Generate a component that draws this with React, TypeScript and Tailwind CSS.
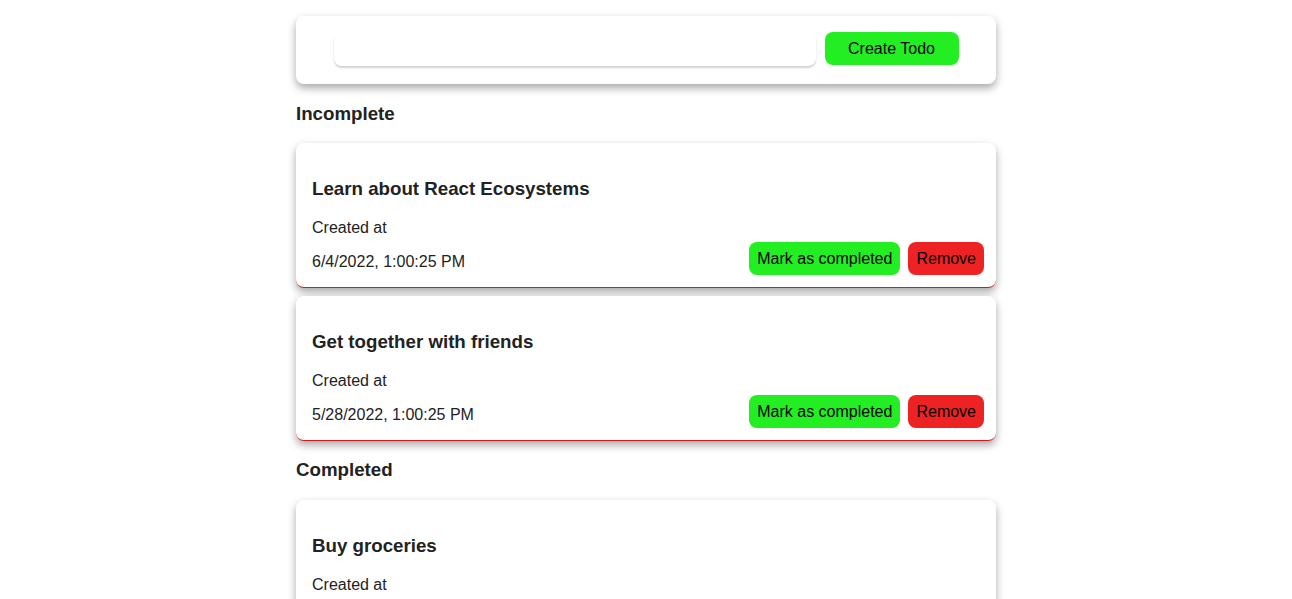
import React from "react";

type Todo = { text: string; date: string; completed: boolean };

const todos: Todo[] = [
  { text: "Learn about React Ecosystems", date: "6/4/2022, 1:00:25 PM", completed: false },
  { text: "Get together with friends", date: "5/28/2022, 1:00:25 PM", completed: false },
  { text: "Buy groceries", date: "5/20/2022, 1:00:25 PM", completed: true },
];

function TodoCard({ todo }: { todo: Todo }) {
  return (
    <div
      className={
        "rounded-lg bg-white pl-4 pr-3 pt-[35px] pb-[12px] shadow-[0_4px_8px_rgba(0,0,0,0.35)] mb-[8px] " +
        (todo.completed ? "" : "border-b-[1.5px] border-[#d81818]")
      }
    >
      <h3 className="text-[18.72px] leading-[22px] font-bold text-[#222]">{todo.text}</h3>
      <div className="flex justify-between items-end mt-[19px]">
        <div className="text-[16px] leading-[18px] text-[#222]">
          <p>Created at</p>
          <p className="mt-[16px] mb-[4px]">{todo.date}</p>
        </div>
        <div className="flex gap-2">
          {!todo.completed && (
            <button className="h-[33px] px-2 rounded-lg bg-[#22ee22] text-[16px] text-black">
              Mark as completed
            </button>
          )}
          <button className="h-[33px] px-2 rounded-lg bg-[#ee2222] text-[16px] text-black">
            Remove
          </button>
        </div>
      </div>
    </div>
  );
}

export default function App() {
  const incomplete = todos.filter((t) => !t.completed);
  const completed = todos.filter((t) => t.completed);
  return (
    <div className="min-h-screen bg-white" style={{ fontFamily: '"Liberation Sans", Arial, sans-serif' }}>
      <div className="w-[700px] mx-auto pt-4">
        <div className="rounded-lg bg-white shadow-[0_4px_8px_rgba(0,0,0,0.35)] flex justify-center items-start gap-[9px] pt-4 pb-[18px]">
          <input
            className="w-[482px] h-[34px] rounded-lg shadow-[0_2px_2px_rgba(0,0,0,0.18)] outline-none px-2 text-[16px]"
            type="text"
          />
          <button className="w-[134px] h-[33px] rounded-lg bg-[#22ee22] text-[16px] text-black">
            Create Todo
          </button>
        </div>
        <h3 className="text-[18.72px] leading-[22px] font-bold text-[#222] mt-[19px] mb-[18px]">Incomplete</h3>
        {incomplete.map((t) => (
          <TodoCard key={t.text} todo={t} />
        ))}
        <h3 className="text-[18.72px] leading-[22px] font-bold text-[#222] mt-[18px] mb-[19px]">Completed</h3>
        {completed.map((t) => (
          <TodoCard key={t.text} todo={t} />
        ))}
      </div>
    </div>
  );
}
